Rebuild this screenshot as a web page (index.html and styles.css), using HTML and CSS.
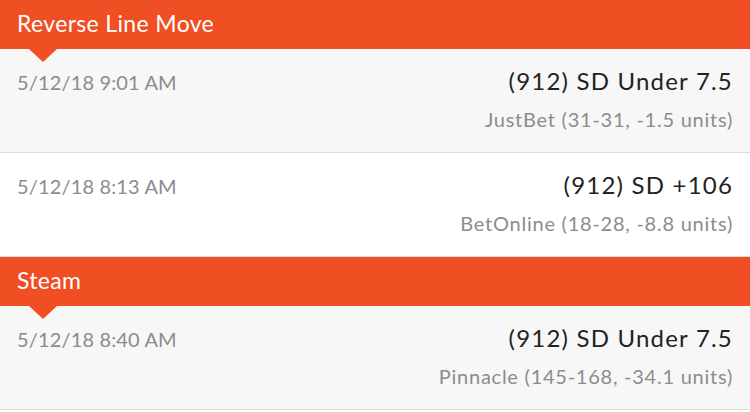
FILE: index.html
```html
<!DOCTYPE html>
<html lang="en">
<head>
  <meta charset="UTF-8">
  <meta name="viewport" content="width=device-width, initial-scale=1.0">
  <title>Alerts</title>
  <link rel="stylesheet" href="styles.css">
</head>
<body>
  <div class="section">
    <div class="section-header">Reverse Line Move</div>
    <div class="alert alt">
      <div class="alert-time">5/12/18 9:01 AM</div>
      <div class="alert-info">
        <div class="alert-pick">(912) SD Under 7.5</div>
        <div class="alert-book">JustBet (31-31, -1.5 units)</div>
      </div>
    </div>
    <div class="alert">
      <div class="alert-time">5/12/18 8:13 AM</div>
      <div class="alert-info">
        <div class="alert-pick">(912) SD +106</div>
        <div class="alert-book">BetOnline (18-28, -8.8 units)</div>
      </div>
    </div>
  </div>

  <div class="section">
    <div class="section-header">Steam</div>
    <div class="alert alt">
      <div class="alert-time">5/12/18 8:40 AM</div>
      <div class="alert-info">
        <div class="alert-pick">(912) SD Under 7.5</div>
        <div class="alert-book">Pinnacle (145-168, -34.1 units)</div>
      </div>
    </div>
  </div>
</body>
</html>
```

FILE: styles.css
```css
body {
  margin: 0;
  font-family: Lato, "Open Sans", sans-serif;
  background: #fff;
}
.section-header {
  position: relative;
  height: 49px;
  line-height: 47px;
  padding-left: 17px;
  background: #f04e23;
  color: #fff;
  font-size: 23px;
  letter-spacing: 0.35px;
}
.section-header::after {
  content: "";
  position: absolute;
  left: 29px;
  bottom: -13px;
  border-left: 14px solid transparent;
  border-right: 14px solid transparent;
  border-top: 13px solid #f04e23;
}
.alert {
  display: flex;
  justify-content: space-between;
  height: 103px;
  padding: 0 17px;
  border-bottom: 1px solid #dcdcdc;
  background: #fff;
}
.alert.alt {
  background: #f7f7f7;
}
.alert-time {
  padding-top: 21px;
  font-size: 20px;
  letter-spacing: 0.15px;
  color: #8c8c8c;
}
.alert-info {
  text-align: right;
  padding-top: 17px;
}
.alert-pick {
  font-size: 24px;
  letter-spacing: 1.2px;
  color: #222;
}
.alert-book {
  margin-top: 12px;
  font-size: 20px;
  letter-spacing: 0.75px;
  color: #8c8c8c;
}
```
